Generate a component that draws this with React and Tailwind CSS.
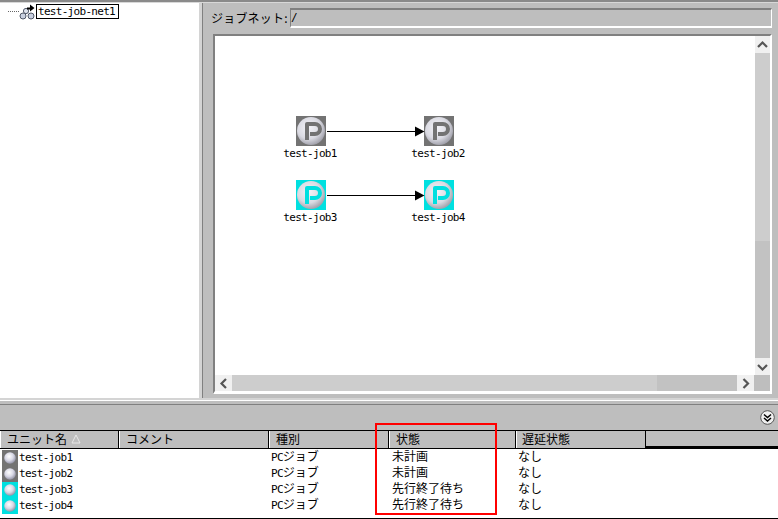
const JP = '"Noto Sans CJK JP", "Liberation Sans", sans-serif';

function L({ children }) {
  return (
    <span className="text-[11px] tracking-[-0.7px] font-['DejaVu_Sans_Mono',monospace] [font-kerning:none]">{children}</span>
  );
}

function JobIcon({ color, id }) {
  return (
    <svg width="30" height="30" viewBox="0 0 30 30" className="block">
      <defs>
        <radialGradient id={id} cx="0.42" cy="0.38" r="0.62">
          <stop offset="0" stopColor="#f4f4f8" />
          <stop offset="0.65" stopColor="#dadae2" />
          <stop offset="1" stopColor="#a4a4ae" />
        </radialGradient>
      </defs>
      <rect width="30" height="30" fill={color} />
      <circle cx="15" cy="15" r="14" fill={`url(#${id})`} />
      <path d="M11 24V8h8a4.6 4.6 0 0 1 0 10h-5" fill="none" stroke={color} strokeWidth="4" strokeLinejoin="round" />
    </svg>
  );
}

function Node({ x, y, color, id, label }) {
  return (
    <div className="absolute w-[60px] flex flex-col items-center" style={{ left: x, top: y }}>
      <JobIcon color={color} id={id} />
      <div className="h-[14px] leading-[14px] whitespace-nowrap text-black -mt-[3px] pr-[2px]"><L>{label}</L></div>
    </div>
  );
}

function Arrow({ x, y }) {
  return (
    <svg className="absolute" style={{ left: x, top: y }} width="98" height="11" viewBox="0 0 98 11">
      <line x1="0" y1="5.5" x2="90" y2="5.5" stroke="#000" strokeWidth="1" />
      <path d="M88 0.5L97.5 5.5L88 10.5Z" fill="#000" />
    </svg>
  );
}

function ArrowBtn({ dir, className }) {
  const d = {
    up: 'M3 10L7.5 5.5L12 10',
    down: 'M3 6L7.5 10.5L12 6',
    left: 'M10 3L5.5 7.5L10 12',
    right: 'M5.5 3L10 7.5L5.5 12',
  }[dir];
  return (
    <div className={`bg-[#f0f0f0] flex items-center justify-center shrink-0 ${className}`}>
      <svg width="15" height="15" viewBox="0 0 15 15">
        <path d={d} fill="none" stroke="#555" strokeWidth="2.2" />
      </svg>
    </div>
  );
}

function HeaderCell({ w, pl, children }) {
  return (
    <div
      className="h-full border-l border-l-white border-r border-r-black flex items-center pb-[2px] text-[12px] text-black"
      style={{ width: w, paddingLeft: pl }}
    >
      {children}
    </div>
  );
}

function Ball({ color, id }) {
  return (
    <div className="w-4 h-4 shrink-0" style={{ background: color }}>
      <svg width="16" height="16" viewBox="0 0 16 16" className="block">
        <defs>
          <radialGradient id={id} cx="0.42" cy="0.36" r="0.65">
            <stop offset="0" stopColor="#ffffff" />
            <stop offset="0.55" stopColor="#d8d8e6" />
            <stop offset="1" stopColor="#9090a4" />
          </radialGradient>
        </defs>
        <circle cx="8" cy="8" r="5.8" fill={`url(#${id})`} />
      </svg>
    </div>
  );
}

const rows = [
  { n: 'test-job1', s: '未計画', c: '#737373' },
  { n: 'test-job2', s: '未計画', c: '#737373' },
  { n: 'test-job3', s: '先行終了待ち', c: '#00e0e0' },
  { n: 'test-job4', s: '先行終了待ち', c: '#00e0e0' },
];

export default function App() {
  return (
    <div className="relative w-[778px] h-[519px] bg-white overflow-hidden flex flex-col text-black" style={{ fontFamily: JP }}>
      <div className="h-[2px] bg-[#8a8a8a] shrink-0" />
      <div className="h-px bg-[#d8d8d8] shrink-0" />

      {/* upper split */}
      <div className="h-[395px] flex shrink-0">
        <div className="w-[199px] bg-white relative shrink-0">
          <div className="flex items-center pl-[8px] pt-[1px] h-[16px]">
            <div className="w-[11px] border-t border-dotted border-[#666] shrink-0" />
            <svg width="17" height="16" viewBox="0 0 17 16" className="block shrink-0">
              <circle cx="4" cy="12" r="3" fill="#c8d0e0" stroke="#505868" />
              <circle cx="12" cy="12" r="3" fill="#c8d0e0" stroke="#505868" />
              <circle cx="7" cy="7" r="2.6" fill="#dfe4ee" stroke="#505868" />
              <path d="M8 3.5h3V0.5L15.5 4L11 7.5V5.5H8Z" fill="#000" />
            </svg>
            <div className="w-[83px] h-[15px] border border-black flex items-center pl-px leading-none whitespace-nowrap">
              <L>test-job-net1</L>
            </div>
          </div>
        </div>
        <div className="w-[3px] bg-[#d4d4d4] shrink-0" />
        <div className="flex-1 bg-[#bebebe] border-l border-l-[#808080] pl-[10px] pr-[6px] flex flex-col">
          <div className="h-[31px] flex items-start pt-[5px] shrink-0 -ml-[2px]">
            <div className="w-[79px] h-[19px] flex items-center text-[12px] tracking-[0.2px] whitespace-nowrap">ジョブネット:</div>
            <div className="flex-1 h-[20px] border-t-2 border-l border-t-[#808080] border-l-[#808080] border-r border-b-2 border-r-white border-b-white bg-[#bebebe] flex items-center pl-0">
              <L>/</L>
            </div>
          </div>
          <div className="h-[360px] border-t-2 border-l-2 border-t-[#808080] border-l-[#808080] border-r-2 border-b-[3px] border-r-white border-b-white bg-white flex flex-col">
            <div className="flex-1 flex min-h-0">
              <div className="flex-1 relative" />
              <div className="w-[15px] flex flex-col shrink-0">
                <ArrowBtn dir="up" className="h-[17px]" />
                <div className="h-[188px] bg-[#cdcdcd]" />
                <div className="flex-1 bg-[#c2c2c2]" />
                <ArrowBtn dir="down" className="h-[17px]" />
              </div>
            </div>
            <div className="h-[16px] flex shrink-0">
              <ArrowBtn dir="left" className="w-[17px]" />
              <div className="w-[425px] bg-[#cdcdcd]" />
              <div className="w-[80px] bg-[#c2c2c2]" />
              <ArrowBtn dir="right" className="w-[17px]" />
              <div className="flex-1 bg-[#bebebe]" />
            </div>
          </div>
        </div>
      </div>

      {/* horizontal splitter */}
      <div className="h-[2px] bg-[#d4d4d4] shrink-0" />
      <div className="h-px bg-white shrink-0" />
      <div className="h-[3px] bg-[#bebebe] shrink-0" />
      <div className="h-px bg-[#808080] shrink-0" />

      {/* lower toolbar */}
      <div className="h-[25px] bg-[#bebebe] flex items-center justify-end pr-[3px] shrink-0">
        <svg width="15" height="15" viewBox="0 0 15 15" className="block">
          <circle cx="7.5" cy="7.5" r="6.8" fill="#f0f0f0" stroke="#555" />
          <path d="M4 4.5L7.5 7.5L11 4.5M4 8L7.5 11L11 8" fill="none" stroke="#000" strokeWidth="1.5" />
        </svg>
      </div>

      {/* table header */}
      <div className="h-[19px] bg-[#bebebe] border-t border-t-black border-b border-b-black flex shrink-0">
        <HeaderCell w={119} pl={6}>
          ユニット名
          <svg width="10" height="10" viewBox="0 0 10 10" className="ml-[4px]">
            <path d="M5 1L9 9H1Z" fill="none" stroke="#e8e8e8" />
          </svg>
        </HeaderCell>
        <HeaderCell w={150} pl={6}>コメント</HeaderCell>
        <HeaderCell w={120} pl={6}>種別</HeaderCell>
        <HeaderCell w={127} pl={6}>状態</HeaderCell>
        <HeaderCell w={130} pl={5}>遅延状態</HeaderCell>
        <div className="flex-1 h-full border-b-2 border-b-black -mb-px" />
      </div>

      {/* table rows */}
      <div className="pt-px pl-[2px] flex flex-col">
        {rows.map((r, i) => (
          <div key={r.n} className="h-[16px] flex items-center text-[12px] leading-none whitespace-nowrap">
            <Ball color={r.c} id={`ball${i}`} />
            <div className="w-[253px] pl-[1px] pb-[4px]"><L>{r.n}</L></div>
            <div className="w-[121px] pb-[4px]"><L>PC</L>ジョブ</div>
            <div className="w-[126px] pb-[4px]">{r.s}</div>
            <div className="pb-[4px]">なし</div>
          </div>
        ))}
      </div>
      <div className="h-px bg-black mt-[4px] shrink-0" />

      {/* diagram canvas nodes */}
      <Node x={281} y={116} color="#737373" id="j1" label="test-job1" />
      <Node x={409} y={116} color="#737373" id="j2" label="test-job2" />
      <Node x={281} y={180} color="#00e0e0" id="j3" label="test-job3" />
      <Node x={409} y={180} color="#00e0e0" id="j4" label="test-job4" />
      <Arrow x={327} y={126} />
      <Arrow x={327} y={190} />

      {/* red annotation */}
      <div className="absolute left-[375px] top-[423px] w-[122px] h-[92px] border-2 border-[#ff0000] pointer-events-none" />
    </div>
  );
}
